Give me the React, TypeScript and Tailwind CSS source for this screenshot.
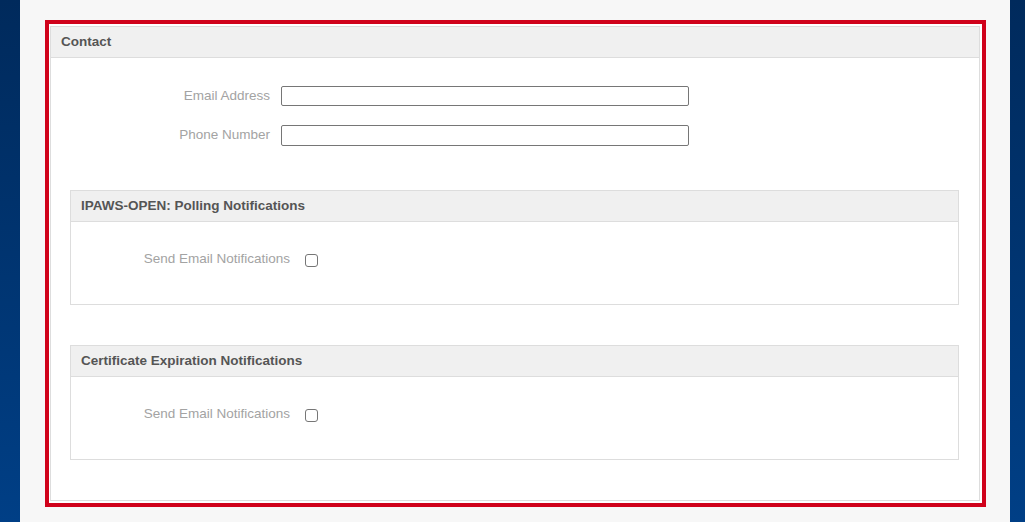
import React from 'react';

const font = { fontFamily: '"Liberation Sans", Arial, sans-serif' };

const FieldRow = ({ label, labelWidth, children }: { label: string; labelWidth: string; children: React.ReactNode }) => (
  <div className="flex items-center">
    <label className={`${labelWidth} shrink-0 text-right text-[13.5px] leading-[18px] text-[#a3a3a3] -mt-[1px]`}>{label}</label>
    {children}
  </div>
);

const SubPanel = ({ title }: { title: string }) => (
  <div className="border border-[#dddddd] bg-white">
    <div className="h-[31px] flex items-center px-[10px] bg-[#f0f0f0] border-b border-[#dddddd] text-[13.5px] font-bold text-[#555555]">
      {title}
    </div>
    <div className="h-[82px] pt-[29px]">
      <FieldRow label="Send Email Notifications" labelWidth="w-[219px]">
        <input type="checkbox" className="ml-[15px] w-[13px] h-[13px] appearance-none border border-[#767676] rounded-[3px] bg-white mt-[1px]" />
      </FieldRow>
    </div>
  </div>
);

export default function App() {
  return (
    <div style={font} className="w-[1025px] h-[522px] flex bg-gradient-to-b from-[#002a5c] to-[#003f86] overflow-hidden">
      <div className="w-[20px] shrink-0" />
      <div className="w-[990px] shrink-0 bg-[#f7f7f7] pt-[20px] pl-[25px]">
        <div className="w-[941px] h-[487px] border-4 border-[#d0021b] bg-white pt-[2px] pl-px pr-[2px] pb-[2px]">
          <div className="h-full border border-[#dddddd] bg-white">
            <div className="h-[31px] flex items-center px-[10px] bg-[#f0f0f0] border-b border-[#dddddd] text-[13.5px] font-bold text-[#555555]">
              Contact
            </div>
            <div className="pt-[28px] pl-[19px] pr-[20px]">
              <div className="flex flex-col gap-[19px] -ml-[19px]">
                <FieldRow label="Email Address" labelWidth="w-[219px]">
                  <input className="ml-[11px] w-[408px] h-[20px] border border-[#767676] rounded-[2px] bg-white" />
                </FieldRow>
                <FieldRow label="Phone Number" labelWidth="w-[219px]">
                  <input className="ml-[11px] w-[408px] h-[21px] border border-[#767676] rounded-[2px] bg-white" />
                </FieldRow>
              </div>
              <div className="mt-[44px] flex flex-col gap-[40px]">
                <SubPanel title="IPAWS-OPEN: Polling Notifications" />
                <SubPanel title="Certificate Expiration Notifications" />
              </div>
            </div>
          </div>
        </div>
      </div>
      <div className="w-[15px] shrink-0" />
    </div>
  );
}
